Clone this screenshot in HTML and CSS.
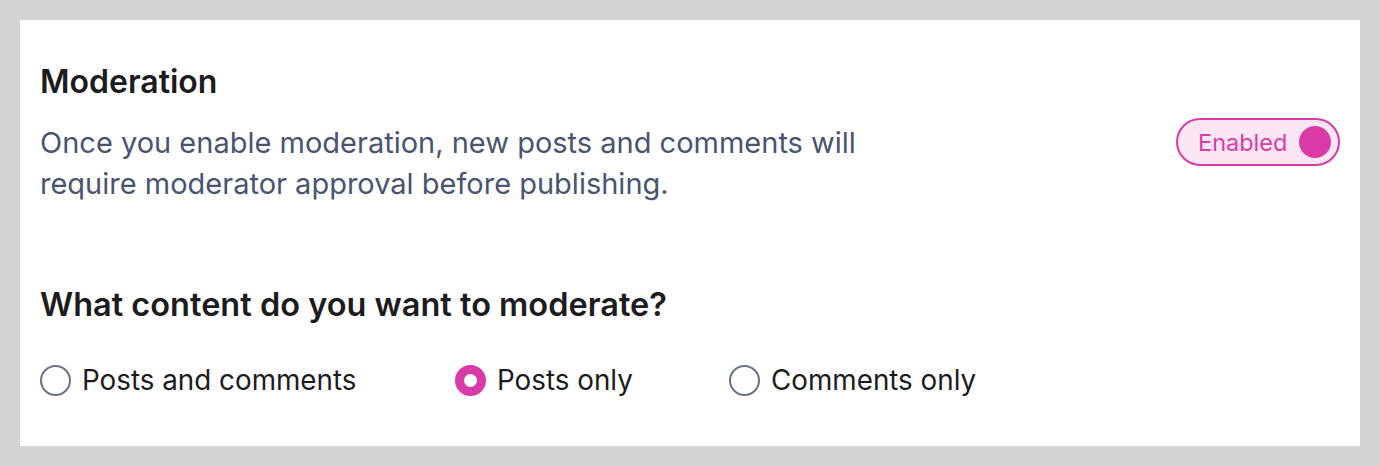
FILE: index.html
```html
<!DOCTYPE html>
<html>
<head>
<meta charset="utf-8">
<link rel="stylesheet" href="styles.css">
</head>
<body>
<div class="card">
  <div class="top">
    <div class="intro">
      <h2 class="title">Moderation</h2>
      <p class="desc">Once you enable moderation, new posts and comments will require moderator approval before publishing.</p>
    </div>
    <button class="toggle"><span class="toggle-label">Enabled</span><span class="knob"></span></button>
  </div>
  <h3 class="question">What content do you want to moderate?</h3>
  <div class="options">
    <label class="option opt-1"><span class="radio"></span><span class="opt-text">Posts and comments</span></label>
    <label class="option opt-2"><span class="radio checked"></span><span class="opt-text">Posts only</span></label>
    <label class="option opt-3"><span class="radio"></span><span class="opt-text">Comments only</span></label>
  </div>
</div>
</body>
</html>
```
FILE: styles.css
```css
html, body { margin: 0; padding: 0; }
body {
  background: #d4d4d4;
  padding: 20px;
  font-family: Inter, "Noto Sans", sans-serif;
  height: 466px;
  box-sizing: border-box;
}
.card {
  background: #fff;
  height: 426px;
  box-sizing: border-box;
  padding: 42px 20px 0 20px;
}
.top {
  display: flex;
  justify-content: space-between;
  align-items: flex-start;
}
.title {
  margin: 0;
  font-size: 32px;
  font-weight: 600;
  color: #1c1c1e;
  line-height: 40px;
}
.desc {
  margin: 20px 0 0 0;
  width: 880px;
  font-size: 29px;
  line-height: 41px;
  color: #4a5470;
}
.toggle {
  margin-top: 56px;
  display: flex;
  align-items: center;
  height: 48px;
  width: 164px;
  box-sizing: border-box;
  border: 2px solid #d93aa6;
  border-radius: 24px;
  background: #fde6f4;
  padding: 0 7px 0 20px;
  justify-content: space-between;
  font-family: inherit;
}
.toggle-label {
  color: #d93aa6;
  font-size: 23.5px;
}
.knob {
  width: 32px;
  height: 32px;
  border-radius: 50%;
  background: #d93aa6;
}
.question {
  margin: 81px 0 0 0;
  font-size: 32.5px;
  font-weight: 600;
  color: #1c1c1e;
  line-height: 40px;
}
.options {
  display: flex;
  margin-top: 38px;
}
.option {
  display: flex;
  align-items: center;
  gap: 11px;
  font-size: 27.8px;
  line-height: 34px;
  color: #1c1c1e;
}
.opt-1 { width: 415px; }
.opt-2 { width: 274px; }
.radio {
  width: 31px;
  height: 31px;
  box-sizing: border-box;
  border: 2px solid #6b7287;
  border-radius: 50%;
}
.radio.checked {
  border: 9px solid #d93aa6;
}
```
